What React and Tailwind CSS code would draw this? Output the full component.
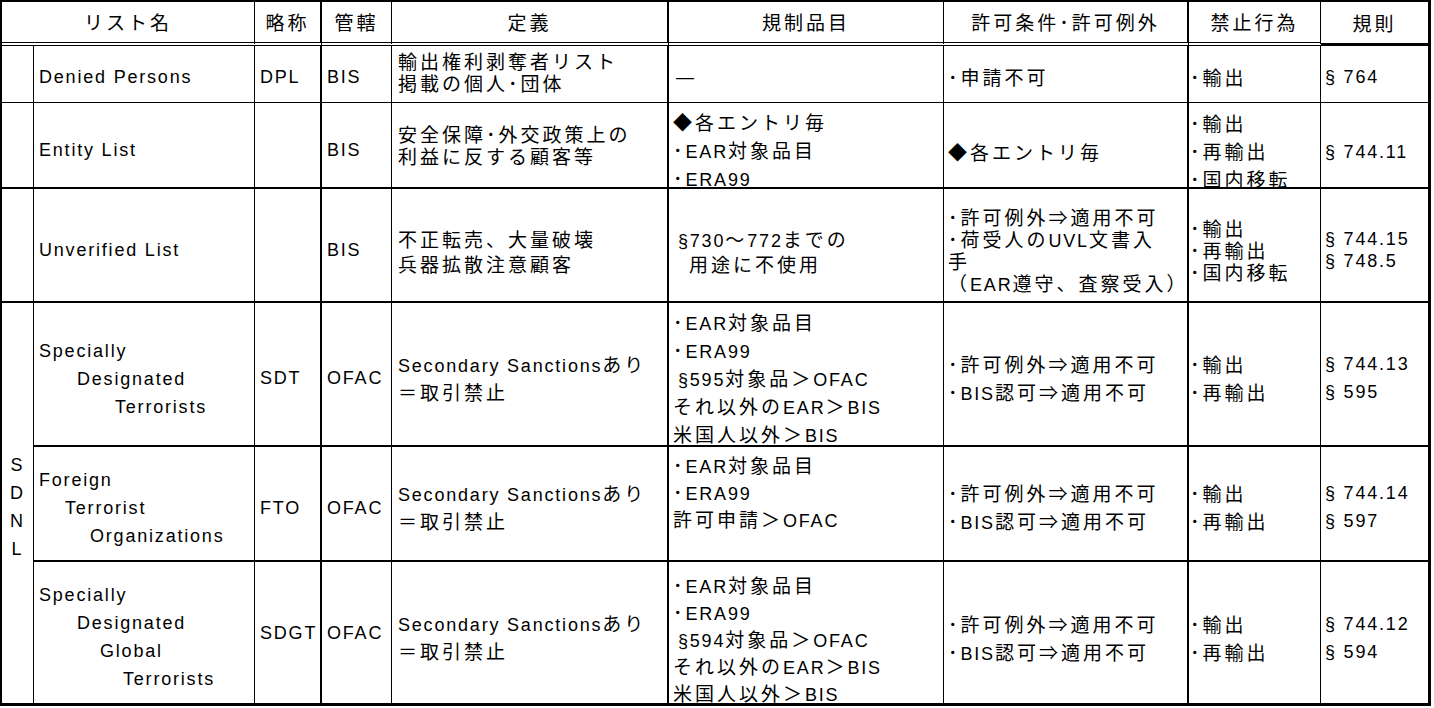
const CJK = /([\u2190-\u21ff\u25a0-\u25ff\u3000-\u30ff\u3400-\u9fff\uff00-\uffef]+)/;

// Excel-style mix: gothic latin + wide-spaced kanji
function Txt({ s }) {
  return s
    .split(CJK)
    .filter(Boolean)
    .map((p, i) =>
      CJK.test(p) ? (
        <span key={i} className="font-['Noto_Sans_CJK_JP',sans-serif] text-[19px] tracking-[3px]">
          {p}
        </span>
      ) : (
        <span
          key={i}
          className="font-['Liberation_Sans','Noto_Sans_CJK_JP',sans-serif] text-[18px] tracking-[1.8px]"
        >
          {p}
        </span>
      )
    );
}

const LH = {
  22: "h-[22px] leading-[22px]",
  25: "h-[25px] leading-[25px]",
  27: "h-[27px] leading-[27px]",
  28: "h-[28px] leading-[28px]",
};

// right borders / left padding by column
const COL = [
  "border-r",
  "border-r pl-[5px]",
  "border-r-2 pl-[5px]",
  "border-r pl-[5px]",
  "border-r-2 pl-[6px]",
  "border-r pl-[4px]",
  "border-r-2 pl-[4px]",
  "border-r pl-[1px]",
  "pl-[4px]",
];

const ROW_B = ["", "border-b", "border-b-2", "border-b-2", "border-b-2", "border-b-2", ""];

function Cell({ r, c, lines = [], lh = 28, pad = "", v = "justify-center", extra = "" }) {
  return (
    <div className={`flex flex-col ${v} border-black ${COL[c]} ${ROW_B[r]} ${pad} ${extra}`}>
      {lines.map((l, i) => {
        const [ind, t] = typeof l === "string" ? ["", l] : l;
        return (
          <div key={i} className={`whitespace-nowrap ${LH[lh]} ${ind}`}>
            <Txt s={t} />
          </div>
        );
      })}
    </div>
  );
}

const HEADERS = ["略称", "管轄", "定義", "規制品目", "許可条件･許可例外", "禁止行為"];
const HCOL = ["border-r-2", "border-r", "border-r-2", "border-r", "border-r-2", "border-r"];

export default function App() {
  return (
    <div className="h-[708px] w-[1434px] bg-white text-black">
      <div className="grid w-[1431px] grid-cols-[32px_221px_67px_70px_277px_275px_245px_132px_107px] grid-rows-[44px_57px_86px_114px_144px_115px_141px] border-t-2 border-r-[3px] border-b-[3px] border-l-2 border-black">
        {/* header */}
        <div className="col-span-2 flex items-center justify-center border-r border-b-4 border-black [border-bottom-style:double]">
          <div className="h-[28px] leading-[28px]">
            <Txt s="リスト名" />
          </div>
        </div>
        {HEADERS.map((h, i) => (
          <div
            key={h}
            className={`flex items-center justify-center border-b-4 border-black [border-bottom-style:double] ${HCOL[i]}`}
          >
            <div className="h-[28px] leading-[28px]">
              <Txt s={h} />
            </div>
          </div>
        ))}
        <div className="flex items-center justify-center border-b-[3px] border-black">
          <div className="h-[28px] leading-[28px]">
            <Txt s="規則" />
          </div>
        </div>

        {/* Denied Persons */}
        <Cell r={1} c={0} />
        <Cell r={1} c={1} lines={["Denied Persons"]} pad="pt-[6px]" />
        <Cell r={1} c={2} lines={["DPL"]} pad="pt-[6px]" />
        <Cell r={1} c={3} lines={["BIS"]} pad="pt-[6px]" />
        <Cell r={1} c={4} lh={22} lines={["輸出権利剥奪者リスト", "掲載の個人･団体"]} pad="pb-[4px]" />
        <Cell r={1} c={5} lines={[["pl-[3px]", "—"]]} pad="pt-[6px]" />
        <Cell r={1} c={6} lines={["･申請不可"]} pad="pt-[6px]" />
        <Cell r={1} c={7} lines={["･輸出"]} pad="pt-[6px]" />
        <Cell r={1} c={8} lines={["§ 764"]} pad="pt-[6px]" />

        {/* Entity List */}
        <Cell r={2} c={0} />
        <Cell r={2} c={1} lines={["Entity List"]} pad="pt-[10px]" />
        <Cell r={2} c={2} />
        <Cell r={2} c={3} lines={["BIS"]} pad="pt-[10px]" />
        <Cell r={2} c={4} lh={22} lines={["安全保障･外交政策上の", "利益に反する顧客等"]} />
        <Cell r={2} c={5} lines={["◆各エントリ毎", "･EAR対象品目", "･ERA99"]} pad="pt-[9px]" />
        <Cell r={2} c={6} lines={["◆各エントリ毎"]} pad="pt-[14px]" />
        <Cell r={2} c={7} lines={["･輸出", "･再輸出", "･国内移転"]} pad="pt-[11px]" />
        <Cell r={2} c={8} lines={["§ 744.11"]} pad="pt-[14px]" />

        {/* Unverified List */}
        <Cell r={3} c={0} />
        <Cell r={3} c={1} lines={["Unverified List"]} pad="pt-[10px]" />
        <Cell r={3} c={2} />
        <Cell r={3} c={3} lines={["BIS"]} pad="pt-[10px]" />
        <Cell r={3} c={4} lh={25} lines={["不正転売、大量破壊", "兵器拡散注意顧客"]} pad="pt-[11px]" />
        <Cell
          r={3}
          c={5}
          lh={25}
          lines={[
            ["pl-[5px]", "§730〜772までの"],
            ["pl-[16px]", "用途に不使用"],
          ]}
          pad="pt-[11px]"
        />
        <Cell
          r={3}
          c={6}
          lh={22}
          lines={["･許可例外⇒適用不可", "･荷受人のUVL文書入", "手", "（EAR遵守、査察受入）"]}
          pad="pt-[10px]"
        />
        <Cell r={3} c={7} lh={22} lines={["･輸出", "･再輸出", "･国内移転"]} pad="pt-[10px]" />
        <Cell r={3} c={8} lh={22} lines={["§ 744.15", "§ 748.5"]} pad="pt-[10px]" />

        {/* SDN list group */}
        <div className="row-span-3 flex flex-col items-center justify-center border-r border-black pt-[7px]">
          {["S", "D", "N", "L"].map((l) => (
            <div key={l} className="h-[28px] leading-[28px]">
              <Txt s={l} />
            </div>
          ))}
        </div>
        <Cell
          r={4}
          c={1}
          lines={[
            ["", "Specially"],
            ["pl-[38px]", "Designated"],
            ["pl-[76px]", "Terrorists"],
          ]}
          pad="pt-[10px]"
        />
        <Cell r={4} c={2} lines={["SDT"]} pad="pt-[8px]" />
        <Cell r={4} c={3} lines={["OFAC"]} pad="pt-[8px]" />
        <Cell r={4} c={4} lines={["Secondary Sanctionsあり", "＝取引禁止"]} pad="pt-[8px]" />
        <Cell
          r={4}
          c={5}
          lines={["･EAR対象品目", "･ERA99", ["pl-[5px]", "§595対象品＞OFAC"], "それ以外のEAR＞BIS", "米国人以外＞BIS"]}
          pad="pt-[8px]"
        />
        <Cell r={4} c={6} lines={["･許可例外⇒適用不可", "･BIS認可⇒適用不可"]} pad="pt-[8px]" />
        <Cell r={4} c={7} lines={["･輸出", "･再輸出"]} pad="pt-[8px]" />
        <Cell r={4} c={8} lines={["§ 744.13", "§ 595"]} pad="pt-[8px]" />

        <Cell
          r={5}
          c={1}
          lines={[
            ["", "Foreign"],
            ["pl-[26px]", "Terrorist"],
            ["pl-[51px]", "Organizations"],
          ]}
          pad="pt-[9px]"
        />
        <Cell r={5} c={2} lines={["FTO"]} pad="pt-[9px]" />
        <Cell r={5} c={3} lines={["OFAC"]} pad="pt-[9px]" />
        <Cell r={5} c={4} lines={["Secondary Sanctionsあり", "＝取引禁止"]} pad="pt-[7px]" />
        <Cell r={5} c={5} lh={27} v="justify-start" lines={["･EAR対象品目", "･ERA99", "許可申請＞OFAC"]} pad="pt-[4px]" />
        <Cell r={5} c={6} lines={["･許可例外⇒適用不可", "･BIS認可⇒適用不可"]} pad="pt-[7px]" />
        <Cell r={5} c={7} lines={["･輸出", "･再輸出"]} pad="pt-[7px]" />
        <Cell r={5} c={8} lines={["§ 744.14", "§ 597"]} pad="pt-[7px]" />

        <Cell
          r={6}
          c={1}
          lines={[
            ["", "Specially"],
            ["pl-[38px]", "Designated"],
            ["pl-[61px]", "Global"],
            ["pl-[84px]", "Terrorists"],
          ]}
          pad="pt-[9px]"
        />
        <Cell r={6} c={2} lines={["SDGT"]} />
        <Cell r={6} c={3} lines={["OFAC"]} />
        <Cell r={6} c={4} lines={["Secondary Sanctionsあり", "＝取引禁止"]} pad="pt-[9px]" />
        <Cell
          r={6}
          c={5}
          lh={27}
          lines={["･EAR対象品目", "･ERA99", ["pl-[5px]", "§594対象品＞OFAC"], "それ以外のEAR＞BIS", "米国人以外＞BIS"]}
          pad="pt-[12px]"
        />
        <Cell r={6} c={6} lines={["･許可例外⇒適用不可", "･BIS認可⇒適用不可"]} pad="pt-[11px]" />
        <Cell r={6} c={7} lines={["･輸出", "･再輸出"]} pad="pt-[11px]" />
        <Cell r={6} c={8} lines={["§ 744.12", "§ 594"]} pad="pt-[11px]" />
      </div>
    </div>
  );
}
